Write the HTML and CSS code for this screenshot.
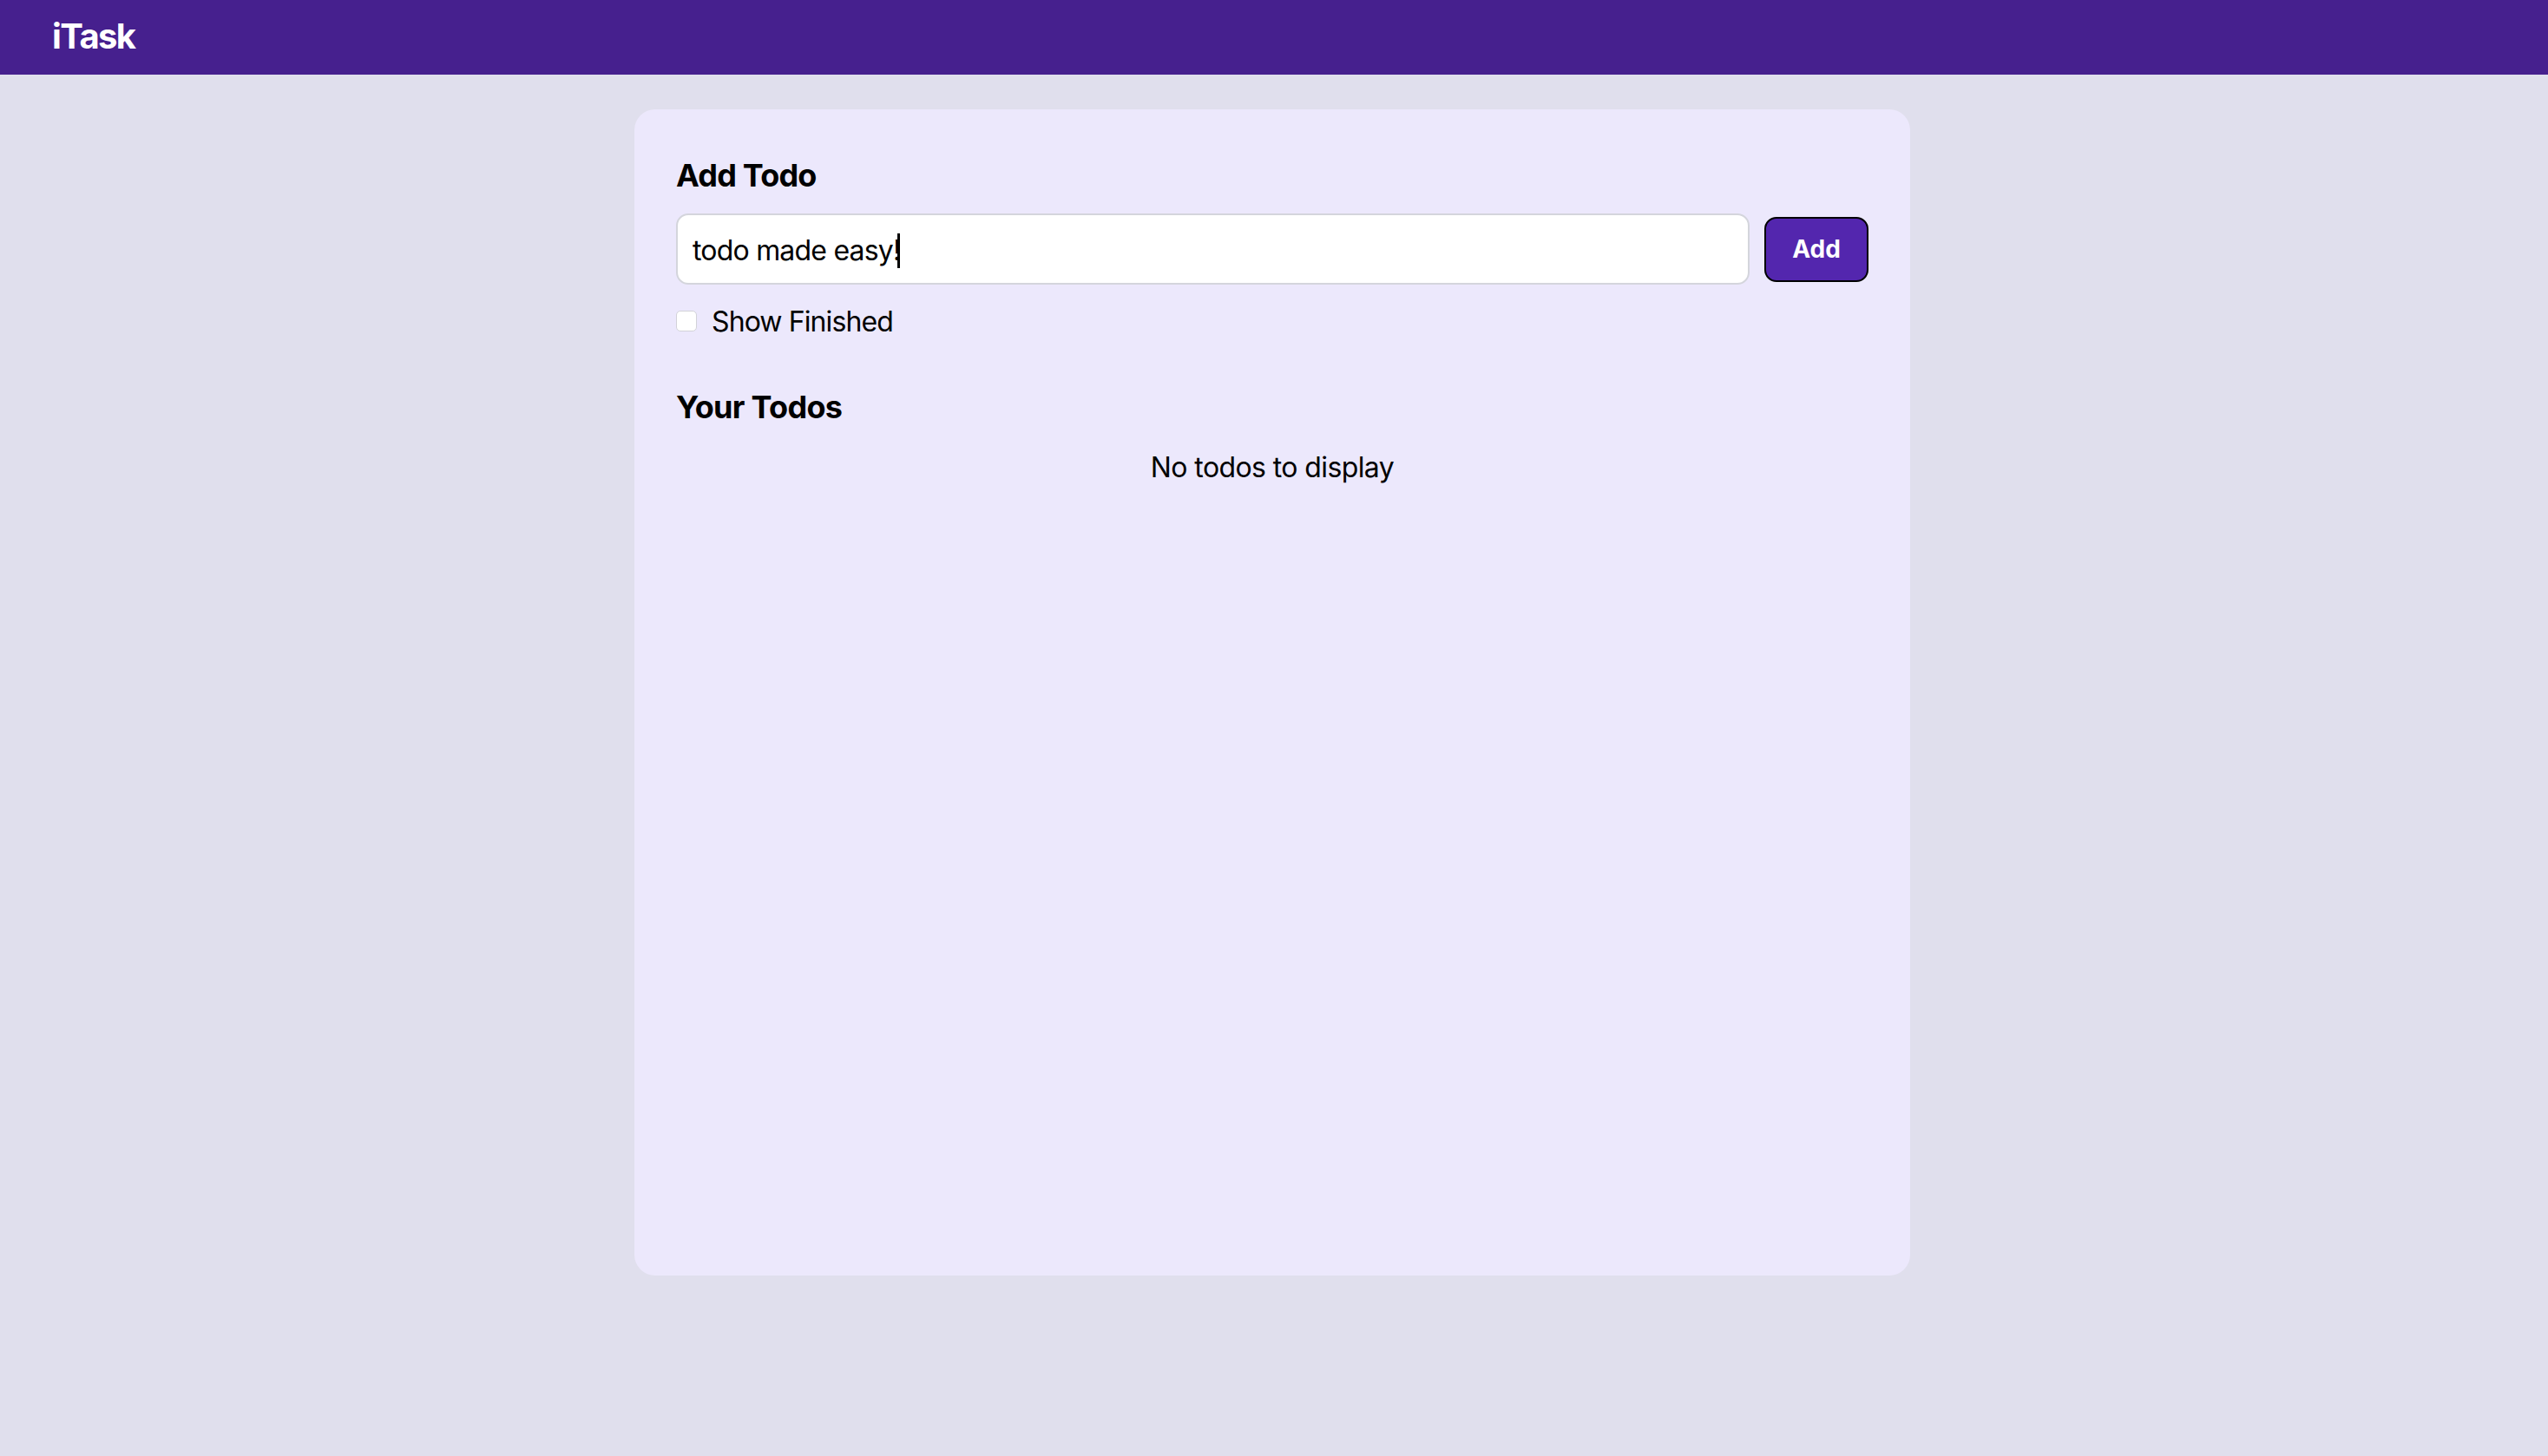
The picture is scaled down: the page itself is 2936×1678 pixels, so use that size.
FILE: index.html
```html
<!DOCTYPE html>
<html lang="en">
<head>
<meta charset="utf-8">
<title>iTask</title>
<link rel="stylesheet" href="styles.css">
</head>
<body>
  <nav class="navbar">
    <div class="logo">iTask</div>
  </nav>
  <main class="card">
    <h2 class="heading">Add Todo</h2>
    <div class="add-row">
      <div class="todo-input"><span class="input-text">todo made easy!</span><span class="caret"></span></div>
      <button class="add-btn">Add</button>
    </div>
    <label class="finished-row">
      <span class="checkbox"></span>
      <span>Show Finished</span>
    </label>
    <h2 class="heading todos-heading">Your Todos</h2>
    <div class="empty">No todos to display</div>
  </main>
</body>
</html>
```
FILE: styles.css
```css
* { box-sizing: border-box; }
html, body {
  margin: 0;
  padding: 0;
}
body {
  background: #e0dfed;
  font-family: Inter, "Noto Sans", "Liberation Sans", sans-serif;
  color: #000;
  min-height: 1678px;
}
.navbar {
  height: 86px;
  background: #46208e;
  display: flex;
  align-items: center;
  padding-left: 60px;
}
.logo {
  color: #fff;
  font-weight: 700;
  font-size: 40px;
  letter-spacing: -1.6px;
  margin-top: -4px;
}
.card {
  width: 1470px;
  height: 1344px;
  margin: 40px 0 0 731px;
  background: #ece8fc;
  border-radius: 24px;
  padding: 48px;
}
.heading {
  margin: 0;
  font-size: 36px;
  line-height: 56px;
  font-weight: 700;
  letter-spacing: -0.8px;
}
.add-row {
  margin-top: 16px;
  display: flex;
  align-items: center;
  gap: 17px;
}
.todo-input {
  flex: 1;
  height: 82px;
  background: #fff;
  border: 2px solid #d4d5dc;
  border-radius: 14px;
  padding-left: 17px;
  padding-top: 3px;
  display: flex;
  align-items: center;
  font-size: 32px;
}
.input-text { letter-spacing: -0.8px; }
.caret {
  display: inline-block;
  width: 3px;
  height: 40px;
  background: #000;
  margin-left: -3px;
}
.add-btn {
  width: 120px;
  height: 75px;
  background: #5326ae;
  color: #fff;
  border: 2px solid #000;
  border-radius: 14px;
  font-family: Inter, "Noto Sans", "Liberation Sans", sans-serif;
  font-weight: 700;
  font-size: 28px;
  padding: 0;
}
.finished-row {
  margin-top: 18px;
  display: flex;
  align-items: center;
  height: 48px;
  font-size: 32px;
  letter-spacing: -0.9px;
}
.checkbox {
  width: 24px;
  height: 24px;
  background: #fff;
  border: 1px solid #d2d2d8;
  border-radius: 5px;
  margin-right: 17px;
}
.todos-heading {
  margin-top: 47px;
  letter-spacing: -0.7px;
}
.empty {
  margin-top: 18px;
  text-align: center;
  font-size: 32px;
  line-height: 48px;
  letter-spacing: -0.6px;
}
```
